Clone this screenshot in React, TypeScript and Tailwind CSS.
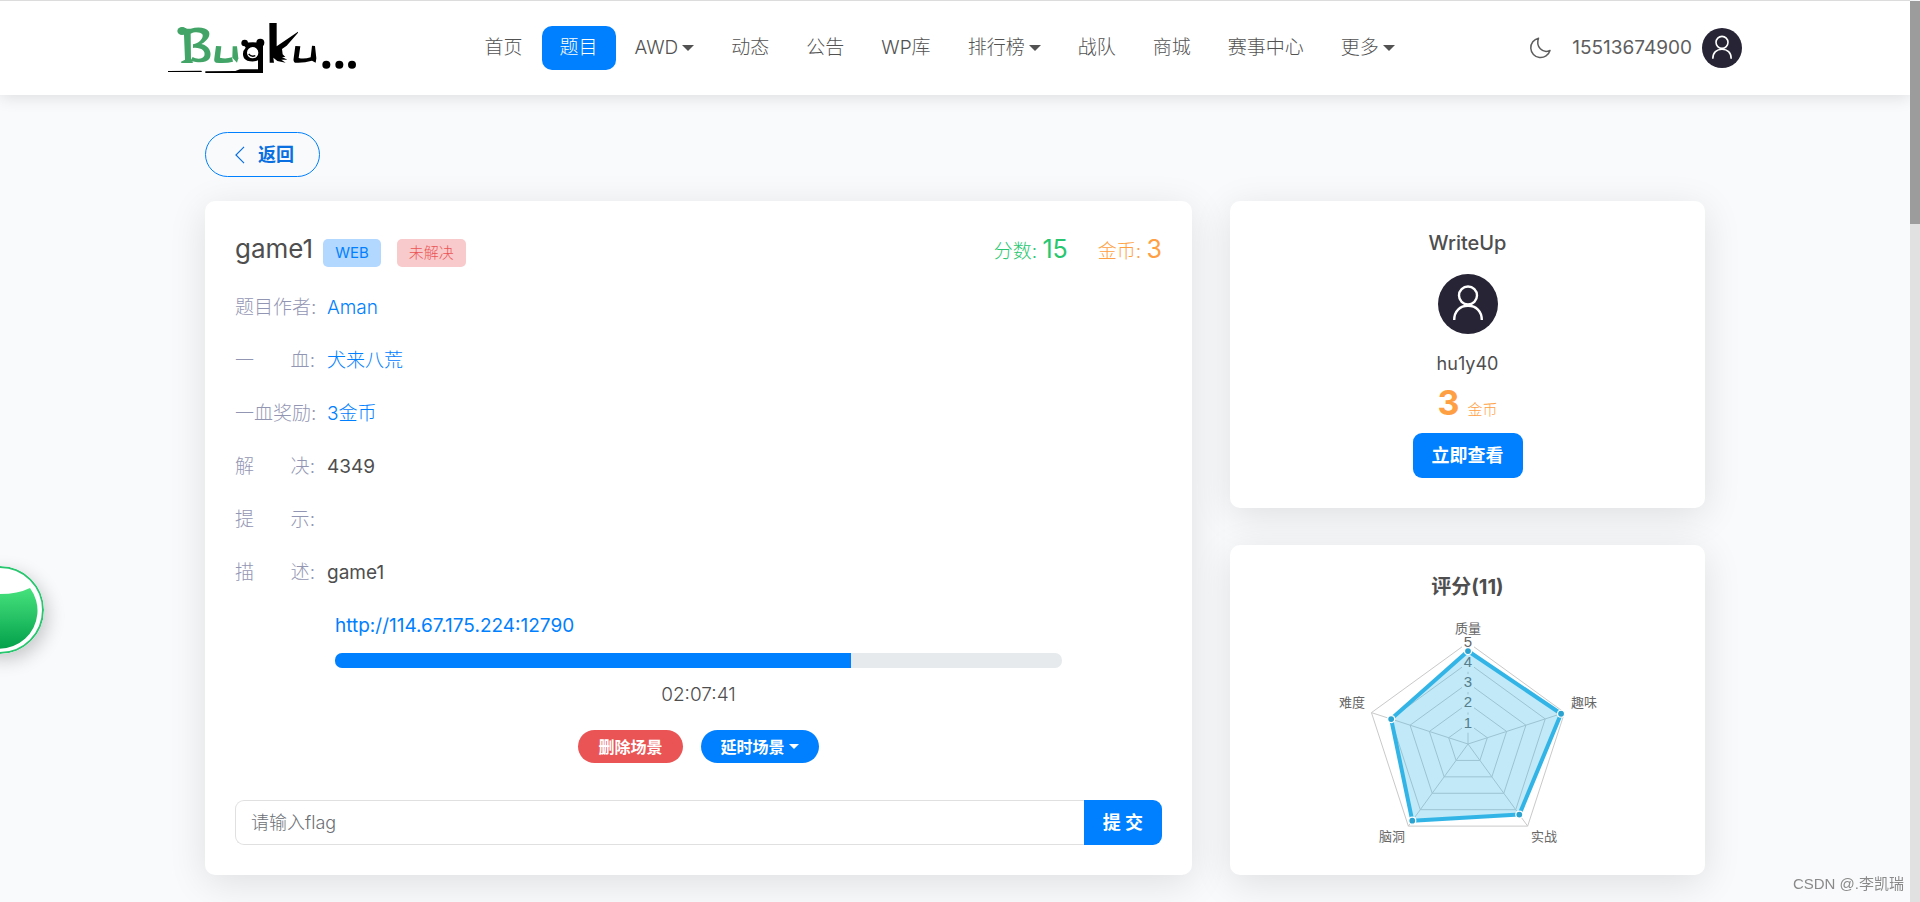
import type { ReactNode } from "react";

const NAV = [
  { label: "首页" },
  { label: "题目", active: true },
  { label: "AWD", menu: true },
  { label: "动态" },
  { label: "公告" },
  { label: "WP库" },
  { label: "排行榜", menu: true },
  { label: "战队" },
  { label: "商城" },
  { label: "赛事中心" },
  { label: "更多", menu: true },
];

function Caret() {
  return (
    <svg viewBox="0 0 12 6" className="h-1.5 w-3" fill="currentColor" aria-hidden="true">
      <path d="M0 0h12L6 6z" />
    </svg>
  );
}

function Logo() {
  return (
    <svg viewBox="0 0 612 186" className="mr-[-13px] mb-1 -ml-2 h-[62px] w-[204px]" role="img" aria-label="Bugku">
      <g fill="#42a567">
        <ellipse cx="66" cy="48" rx="14" ry="12" />
        <path
          fillRule="evenodd"
          d="M64 37C72 35 80 44 92 41C114 35 138 37 147 50C152 64 140 78 124 87C148 92 157 114 149 130C142 143 118 145 94 138L100 141L97 144L64 144L63 140L75 134L72 60ZM92 56L93 134L98 126C112 134 128 132 133 122C138 108 122 96 99 99L99 88C116 84 130 72 128 59C120 50 104 50 92 56Z"
        />
        <path d="M168 93L184 94L180 128Q196 133 216 127L219 140Q198 146 168 143Q161 141 163 130Z" />
        <path d="M218 94L231 94L235 130L231 143L217 128Z" />
      </g>
      <g fill="#000">
        <circle cx="254" cy="84" r="10" />
        <circle cx="301" cy="83" r="12" />
        <path
          fillRule="evenodd"
          d="M250 86Q278 78 309 86L309 174L136 174L136 169L226 168L240 163L294 163L294 136Q280 142 262 137Q248 132 249 116Q249 106 257 98ZM261 113A17 17 0 1 0 295 113A17 17 0 1 0 261 113Z"
        />
        <path d="M24 168L124 167L126 171L24 171Z" />
        <path d="M328 24L350 24L350 94L414 50L414 53L380 92L366 102L368 118L376 126L366 126L382 134L364 134L377 143L352 138L340 128L342 143L329 143Z" />
        <path d="M406 93L421 94L416 129Q432 133 452 127L456 92L465 93L469 130L467 143L456 137Q430 145 405 143Q399 140 401 130Z" />
        <circle cx="499" cy="149" r="12" />
        <circle cx="538" cy="149" r="12" />
        <circle cx="576" cy="149" r="12" />
      </g>
      <path d="M266 117Q274 127 286 122" fill="none" stroke="#000" strokeWidth="4" />
    </svg>
  );
}

function Avatar({ className }: { className: string }) {
  return (
    <svg viewBox="0 0 60 60" className={className} role="img" aria-label="avatar">
      <circle cx="30" cy="30" r="30" fill="#262435" />
      <g fill="none" stroke="#fff" strokeWidth="2.4">
        <circle cx="30" cy="21.5" r="9" />
        <path d="M16.2 46C16.2 37 22 31.8 30 31.8S43.8 37 43.8 46" />
      </g>
    </svg>
  );
}

function Card({ className, children }: { className: string; children: ReactNode }) {
  return (
    <section className={`rounded-[10px] bg-white shadow-[0_8px_38px_rgba(0,0,0,0.11)] ${className}`}>
      {children}
    </section>
  );
}

function Row({ label, children }: { label: string; children?: ReactNode }) {
  return (
    <div className="flex h-[53px] items-center gap-3">
      <dt className="flex w-20 text-[#9396b3]">
        <span className="flex flex-1 justify-between">
          {[...label].map((c, i) => (
            <span key={i}>{c}</span>
          ))}
        </span>
        :
      </dt>
      <dd>{children}</dd>
    </div>
  );
}

const CX = 168;
const CY = 120;
const STEP = 20.3;
const SCORES = [4.58, 4.82, 4.3, 4.67, 3.98];

function vertex(i: number, value: number) {
  const a = (Math.PI * 2 * i) / 5 - Math.PI / 2;
  return [CX + Math.cos(a) * value * STEP, CY + Math.sin(a) * value * STEP];
}

function ring(values: number[]) {
  return values.map((v, i) => vertex(i, v).join(",")).join(" ");
}

function Radar() {
  return (
    <svg
      viewBox="0 0 336 221"
      className="h-[221px] w-[336px] overflow-visible"
      fontFamily='"Liberation Sans", "Noto Sans CJK SC", sans-serif'
      fontWeight="400"
      role="img"
      aria-label="评分"
    >
      <g fill="none" stroke="#c9c9c9">
        {[1, 2, 3, 4, 5].map((n) => (
          <polygon key={n} points={ring([n, n, n, n, n])} />
        ))}
        {[0, 1, 2, 3, 4].map((i) => {
          const [x, y] = vertex(i, 5);
          return <line key={i} x1={CX} y1={CY} x2={x} y2={y} />;
        })}
      </g>
      {[1, 2, 3, 4, 5].map((n) => (
        <g key={n}>
          <rect x={CX - 6} y={CY - n * STEP - 9} width="12" height="18" fill="#fff" />
          <text x={CX} y={CY - n * STEP + 4} textAnchor="middle" fontSize="15" fill="#666">
            {n}
          </text>
        </g>
      ))}
      <polygon points={ring(SCORES)} fill="#32b5e6" fillOpacity="0.3" stroke="#32b5e6" strokeWidth="4" strokeLinejoin="round" />
      {SCORES.map((v, i) => {
        const [x, y] = vertex(i, v);
        return <circle key={i} cx={x} cy={y} r="3.5" fill="#2ba3d0" stroke="#fff" strokeWidth="1.2" />;
      })}
      <g fontSize="13" fill="#666" textAnchor="middle">
        <text x="168" y="9">质量</text>
        <text x="284" y="83">趣味</text>
        <text x="244" y="217">实战</text>
        <text x="92" y="217">脑洞</text>
        <text x="52" y="83">难度</text>
      </g>
    </svg>
  );
}

export default function App() {
  return (
    <div className="min-h-screen bg-[#f9fafc] pr-2.5 font-['Inter','Noto_Sans_CJK_SC',sans-serif] text-[19px] leading-7 font-light text-[#4e4e4e]">
      <header className="border-t border-[#dcdcdc] bg-white shadow-[0_2px_16px_rgba(0,0,0,0.12)]">
        <div className="mx-auto flex h-[94px] max-w-[1574px] items-center justify-between">
          <a href="#home">
            <Logo />
          </a>
          <nav className="flex items-center gap-px">
            {NAV.map((n) => (
              <a
                key={n.label}
                href={`#${n.label}`}
                className={`flex h-11 items-center gap-1 rounded-[10px] px-[18px] ${n.active ? "bg-[#0080ff] text-white" : "text-[#525252]"}`}
              >
                {n.label}
                {n.menu && <Caret />}
              </a>
            ))}
          </nav>
          <div className="flex items-center text-[#5e5e5e]">
            <button type="button" aria-label="切换主题" className="mr-5">
              <svg viewBox="0 0 24 24" className="size-6" fill="none" stroke="currentColor" strokeWidth="1.5" strokeLinejoin="round" aria-hidden="true">
                <path d="M10.5 2.2A9.8 9.8 0 1 0 22 14.5C14.5 18 7.5 10.5 10.5 2.2Z" />
              </svg>
            </button>
            <a href="#user" className="flex items-center gap-2.5">
              <span className="font-normal">15513674900</span>
              <Avatar className="size-10" />
            </a>
          </div>
        </div>
      </header>

      <main className="mx-auto max-w-[1500px] pt-[37px]">
        <a href="#back" className="inline-flex h-[45px] items-center rounded-full border border-[#0080ff] px-[25px] text-[18px] font-bold text-[#0a6fe0]">
          <svg viewBox="0 0 20 20" className="mr-[9px] size-[18px]" fill="none" stroke="currentColor" strokeWidth="1.3" aria-hidden="true">
            <path d="M14.5 1L5.5 10L14.5 19" />
          </svg>
          返回
        </a>

        <div className="mt-6 flex items-stretch gap-[38px]">
          <Card className="flex-1 px-[30px] pt-[29px] pb-[30px]">
            <div className="flex items-baseline justify-between">
              <div className="flex items-baseline">
                <h1 className="text-[26px] leading-[38px] font-normal">game1</h1>
                <span className="ml-2.5 rounded-[5px] bg-[#b2d8ff] px-3 text-[15px] leading-7 font-normal text-[#0080ff]">WEB</span>
                <span className="ml-4 rounded-[5px] bg-[#f9cacb] px-3 text-[15px] leading-7 text-[#ea5455]">未解决</span>
              </div>
              <div className="flex gap-[30px]">
                <span className="text-[#28c76f]">
                  分数: <span className="text-[25px] font-normal">15</span>
                </span>
                <span className="text-[#ff9f43]">
                  金币: <span className="text-[25px] font-normal">3</span>
                </span>
              </div>
            </div>

            <dl className="mt-[13px]">
              <Row label="题目作者"><a href="#author" className="text-[#0080ff]">Aman</a></Row>
              <Row label="一血"><a href="#blood" className="text-[#0080ff]">犬来八荒</a></Row>
              <Row label="一血奖励"><span className="text-[#0080ff]">3金币</span></Row>
              <Row label="解决"><span className="font-normal">4349</span></Row>
              <Row label="提示" />
              <Row label="描述"><span className="font-normal">game1</span></Row>
            </dl>

            <div className="mx-[100px]">
              <a href="http://114.67.175.224:12790" className="flex h-[54px] items-center font-normal text-[#0080ff]">
                http://114.67.175.224:12790
              </a>
              <div className="h-[15px] overflow-hidden rounded-[7px] bg-[#e7eaed]" role="progressbar" aria-valuenow={71} aria-label="剩余时间">
                <div className="h-full w-[71%] bg-[#0080ff]" />
              </div>
              <div className="mt-[13px] text-center">02:07:41</div>
              <div className="mt-[21px] flex justify-center gap-[18px]">
                <button type="button" className="h-[33px] rounded-full bg-[#ea5455] px-5 text-[16px] font-bold text-white">删除场景</button>
                <button type="button" className="flex h-[33px] items-center gap-1 rounded-full bg-[#0080ff] px-5 text-[16px] font-bold text-white">
                  延时场景
                  <svg viewBox="0 0 10 5" className="h-[5px] w-2.5" fill="currentColor" aria-hidden="true">
                    <path d="M0 0h10L5 5z" />
                  </svg>
                </button>
              </div>
            </div>

            <form className="mt-[37px] flex h-[45px]" onSubmit={(e) => e.preventDefault()}>
              <input
                aria-label="flag"
                placeholder="请输入flag"
                className="min-w-0 flex-1 rounded-l-[9px] border border-r-0 border-[#e0e0e0] px-[15px] text-[18px] outline-none placeholder:text-[#6c6f75]"
              />
              <button type="submit" className="rounded-r-[9px] bg-[#0080ff] px-[19px] text-[18px] font-bold text-white">提 交</button>
            </form>
          </Card>

          <aside className="flex w-[475px] flex-col gap-[37px]">
            <Card className="flex flex-col items-center p-[30px] pt-[28px]">
              <h2 className="text-[20px] font-medium">WriteUp</h2>
              <Avatar className="mt-[17px] size-[60px]" />
              <div className="mt-4 text-[18px] font-normal">hu1y40</div>
              <div className="flex h-[55px] items-baseline gap-2 leading-[50px] text-[#ff9f43]">
                <span className="text-[34px] font-bold">3</span>
                <span className="text-[15px]">金币</span>
              </div>
              <button type="button" className="h-[45px] rounded-[9px] bg-[#0080ff] px-[19px] text-[18px] font-bold text-white">立即查看</button>
            </Card>
            <Card className="flex flex-1 flex-col items-center p-[30px] pt-[28px]">
              <h2 className="text-[20px] font-bold">评分(11)</h2>
              <div className="mt-[23px]">
                <Radar />
              </div>
            </Card>
          </aside>
        </div>
      </main>

      <div className="fixed top-px right-0 bottom-0 w-2.5 bg-[#e1e1e1]">
        <div className="h-[223px] bg-[#9c9c9c]" />
      </div>

      <svg viewBox="0 0 88 88" className="fixed top-[566px] -left-11 size-[88px] rounded-full shadow-[4px_6px_18px_rgba(0,0,0,0.2)]" aria-hidden="true">
        <defs>
          <linearGradient id="liquid" x1="0" y1="0" x2="0" y2="1">
            <stop offset="0" stopColor="#46e27d" />
            <stop offset="1" stopColor="#04a04b" />
          </linearGradient>
        </defs>
        <circle cx="44" cy="44" r="43" fill="#fff" stroke="#28c76f" strokeWidth="2" />
        <path d="M13 22Q27 28 44 28Q62 28 74 22A38 38 0 1 1 13 22Z" fill="url(#liquid)" />
      </svg>

      <div className="fixed right-4 bottom-2 font-['Liberation_Sans','Noto_Sans_CJK_SC',sans-serif] text-[15px] leading-5 font-normal text-[#8a8a8a]">
        CSDN @.李凯瑞
      </div>
    </div>
  );
}
